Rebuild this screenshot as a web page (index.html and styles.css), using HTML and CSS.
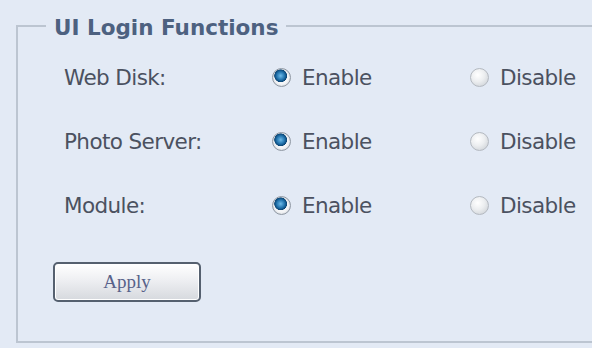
FILE: index.html
```html
<!DOCTYPE html>
<html lang="en">
<head>
    <meta charset="utf-8">
    <link rel="stylesheet" href="styles.css">
    <title>UI Login Functions</title>
</head>
<body>
    <fieldset class="panel">
        <legend class="panel-title">UI Login Functions</legend>

        <div class="row">
            <span class="label">Web Disk:</span>
            <label class="opt"><span class="radio on"></span>Enable</label>
            <label class="opt"><span class="radio"></span>Disable</label>
        </div>
        <div class="row">
            <span class="label">Photo Server:</span>
            <label class="opt"><span class="radio on"></span>Enable</label>
            <label class="opt"><span class="radio"></span>Disable</label>
        </div>
        <div class="row">
            <span class="label">Module:</span>
            <label class="opt"><span class="radio on"></span>Enable</label>
            <label class="opt"><span class="radio"></span>Disable</label>
        </div>

        <button class="apply" type="button">Apply</button>
    </fieldset>
</body>
</html>
```

FILE: styles.css
```css
* {
    box-sizing: border-box;
}
html, body {
    margin: 0;
    padding: 0;
    height: 100%;
    overflow: hidden;
}
body {
    background-color: #e3eaf5;
    font-family: "DejaVu Sans", "Liberation Sans", sans-serif;
    color: #4b5160;
}
.panel {
    margin: 13px 0 0 16px;
    border: 2px solid #bcc5d1;
    border-right: none;
    padding: 6px 0 39px 46px;
    min-width: 0;
}
.panel-title {
    margin-left: -18px;
    padding: 4px 8px 0;
    font-size: 21.5px;
    line-height: 22px;
    font-weight: bold;
    color: #4d6180;
}
.row {
    display: flex;
    align-items: center;
    height: 64px;
    font-size: 21.5px;
    letter-spacing: -0.6px;
}
.label {
    flex: none;
    width: 208px;
}
.opt {
    flex: none;
    display: flex;
    align-items: center;
    width: 198px;
}
.opt:last-child {
    width: auto;
}
.radio {
    flex: none;
    width: 19px;
    height: 19px;
    border-radius: 50%;
    margin-right: 11px;
    border: 1px solid #b4b9c0;
    background: radial-gradient(circle at 40% 35%, #ffffff 0%, #eceef0 45%, #c6cbd1 100%);
}
.radio.on {
    border: 1px solid #8f98a3;
    background:
        radial-gradient(circle at 45% 40%, #6fbbe8 0%, #2476b0 28%, #0b4676 44%, transparent 48%),
        radial-gradient(circle, #f4f5f7 55%, #b3bac3 100%);
}
.apply {
    display: block;
    margin-top: 25px;
    margin-left: -11px;
    width: 148px;
    height: 40px;
    border: 2px solid #55606f;
    border-radius: 5px;
    background: linear-gradient(#ffffff, #eeeff2 45%, #d6d9de);
    box-shadow: inset 0 0 0 1px #ffffff;
    font-family: "Liberation Serif", serif;
    font-size: 19px;
    color: #58628a;
    padding: 0;
}
```
